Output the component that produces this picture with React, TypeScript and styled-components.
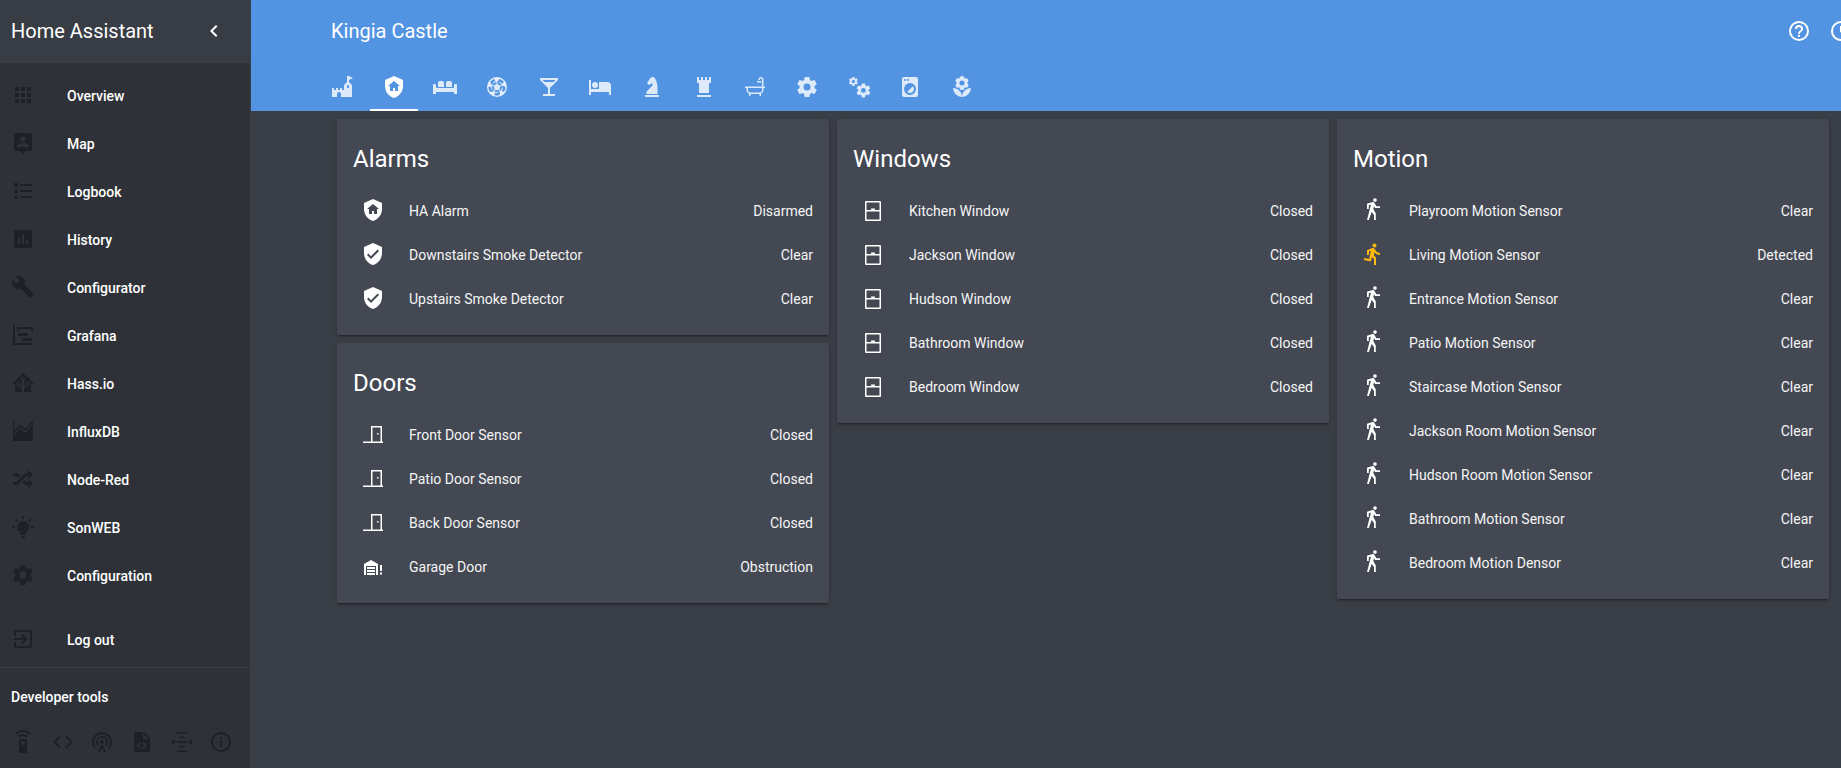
import styled, { createGlobalStyle } from 'styled-components'

const GEAR = 'M12,15.5A3.5,3.5 0 0,1 8.5,12A3.5,3.5 0 0,1 12,8.5A3.5,3.5 0 0,1 15.5,12A3.5,3.5 0 0,1 12,15.5M19.43,12.97C19.47,12.65 19.5,12.33 19.5,12C19.5,11.67 19.47,11.34 19.43,11L21.54,9.37C21.73,9.22 21.78,8.95 21.66,8.73L19.66,5.27C19.54,5.05 19.27,4.96 19.05,5.05L16.56,6.05C16.04,5.66 15.5,5.32 14.87,5.07L14.5,2.42C14.46,2.18 14.25,2 14,2H10C9.75,2 9.54,2.18 9.5,2.42L9.13,5.07C8.5,5.32 7.96,5.66 7.44,6.05L4.95,5.05C4.73,4.96 4.46,5.05 4.34,5.27L2.34,8.73C2.21,8.95 2.27,9.22 2.46,9.37L4.57,11C4.53,11.34 4.5,11.67 4.5,12C4.5,12.33 4.53,12.65 4.57,12.97L2.46,14.63C2.27,14.78 2.21,15.05 2.34,15.27L4.34,18.73C4.46,18.95 4.73,19.03 4.95,18.95L7.44,17.94C7.96,18.34 8.5,18.68 9.13,18.93L9.5,21.58C9.54,21.82 9.75,22 10,22H14C14.25,22 14.46,21.82 14.5,21.58L14.87,18.93C15.5,18.67 16.04,18.34 16.56,17.94L19.05,18.95C19.27,19.03 19.54,18.95 19.66,18.73L21.66,15.27C21.78,15.05 21.73,14.78 21.54,14.63L19.43,12.97Z'

const paths = {
  apps: 'M16,20H20V16H16M16,14H20V10H16M10,8H14V4H10M16,8H20V4H16M10,14H14V10H10M4,14H8V10H4M4,20H8V16H4M10,20H14V16H10M4,8H8V4H4V8Z',
  accountLocation: 'M18,16H6V15.1C6,13.1 10,12 12,12C14,12 18,13.1 18,15.1M12,5.3C13.5,5.3 14.7,6.5 14.7,8C14.7,9.5 13.5,10.7 12,10.7C10.5,10.7 9.3,9.5 9.3,8C9.3,6.5 10.5,5.3 12,5.3M19,2H5C3.89,2 3,2.89 3,4V18A2,2 0 0,0 5,20H9L12,23L15,20H19A2,2 0 0,0 21,18V4C21,2.89 20.1,2 19,2Z',
  listType: 'M5,9.5L7.5,14H2.5L5,9.5M3,4H7V8H3V4M5,20A2,2 0 0,0 7,18A2,2 0 0,0 5,16A2,2 0 0,0 3,18A2,2 0 0,0 5,20M9,5V7H21V5H9M9,19H21V17H9V19M9,13H21V11H9V13Z',
  pollBox: 'M17,17H15V13H17M13,17H11V7H13M9,17H7V10H9M19,3H5C3.89,3 3,3.89 3,5V19A2,2 0 0,0 5,21H19A2,2 0 0,0 21,19V5C21,3.89 20.1,3 19,3Z',
  wrench: 'M22.7,19L13.6,9.9C14.5,7.6 14,4.9 12.1,3C10.1,1 7.1,0.6 4.7,1.7L9,6L6,9L1.6,4.7C0.4,7.1 0.9,10.1 2.9,12.1C4.8,14 7.5,14.5 9.8,13.6L18.9,22.7C19.3,23.1 19.9,23.1 20.3,22.7L22.6,20.4C23.1,20 23.1,19.3 22.7,19Z',
  timeline: 'M2,2H4V20H22V22H2V2M7,10H17V13H7V10M11,15H21V18H11V15M6,4H22V8H20V6H8V8H6V4Z',
  hass: 'M21.8,13H20V21H13V17.67L15.79,14.88L16.5,15C17.66,15 18.6,14.06 18.6,12.9C18.6,11.74 17.66,10.8 16.5,10.8A2.1,2.1 0 0,0 14.4,12.9L14.5,13.61L13,15.13V9.65C13.66,9.29 14.1,8.6 14.1,7.8A2.1,2.1 0 0,0 12,5.7A2.1,2.1 0 0,0 9.9,7.8C9.9,8.6 10.34,9.29 11,9.65V15.13L9.5,13.61L9.6,12.9A2.1,2.1 0 0,0 7.5,10.8A2.1,2.1 0 0,0 5.4,12.9A2.1,2.1 0 0,0 7.5,15L8.21,14.88L11,17.67V21H4V13H2.25C1.83,13 1.42,13 1.42,12.79C1.43,12.57 1.85,12.15 2.28,11.72L11,3C11.33,2.67 11.67,2.33 12,2.33C12.33,2.33 12.67,2.67 13,3L17,7V6H19V9L21.78,11.78C22.18,12.18 22.59,12.59 22.6,12.8C22.6,13 22.2,13 21.8,13M7.5,12A0.9,0.9 0 0,1 8.4,12.9A0.9,0.9 0 0,1 7.5,13.8A0.9,0.9 0 0,1 6.6,12.9A0.9,0.9 0 0,1 7.5,12M16.5,12C17,12 17.4,12.4 17.4,12.9C17.4,13.4 17,13.8 16.5,13.8A0.9,0.9 0 0,1 15.6,12.9A0.9,0.9 0 0,1 16.5,12M12,6.9C12.5,6.9 12.9,7.3 12.9,7.8C12.9,8.3 12.5,8.7 12,8.7C11.5,8.7 11.1,8.3 11.1,7.8C11.1,7.3 11.5,6.9 12,6.9Z',
  influx: 'M2,2H3.5V16L9,10L14.5,14L22,5V22H2ZM3.5,11.5L9,5.5L14.5,9.5L22,1V3.5L14.5,12L9,8L3.5,14Z',
  shuffle: 'M17,3L22.25,7.5L17,12L22.25,16.5L17,21V18H14.26L11.44,15.18L13.56,13.06L15.5,15H17V12L17,9H15.5L6.5,18H2V15H5.26L14.26,6H17V3M2,6H6.5L9.32,8.82L7.2,10.94L5.26,9H2V6Z',
  bulb: 'M12,6A6,6 0 0,1 18,12C18,14.22 16.79,16.16 15,17.2V19A1,1 0 0,1 14,20H10A1,1 0 0,1 9,19V17.2C7.21,16.16 6,14.22 6,12A6,6 0 0,1 12,6M14,21V22A1,1 0 0,1 13,23H11A1,1 0 0,1 10,22V21H14M20,11H23V13H20V11M1,11H4V13H1V11M13,1V4H11V1H13M4.92,3.5L7.05,5.64L5.63,7.05L3.5,4.93L4.92,3.5M16.95,5.63L19.07,3.5L20.5,4.93L18.37,7.05L16.95,5.63Z',
  gear: GEAR,
  exit: 'M19,3H5C3.89,3 3,3.89 3,5V9H5V5H19V19H5V15H3V19A2,2 0 0,0 5,21H19A2,2 0 0,0 21,19V5C21,3.89 20.1,3 19,3M10.08,15.58L11.5,17L16.5,12L11.5,7L10.08,8.41L12.67,11H3V13H12.67L10.08,15.58Z',
  remote: 'M12,0C8.96,0 6.21,1.23 4.22,3.22L5.63,4.63C7.26,3 9.5,2 12,2C14.5,2 16.74,3 18.36,4.64L19.77,3.23C17.79,1.23 15.04,0 12,0M7.05,6.05L8.46,7.46C9.37,6.56 10.62,6 12,6C13.38,6 14.63,6.56 15.54,7.46L16.95,6.05C15.68,4.78 13.93,4 12,4C10.07,4 8.32,4.78 7.05,6.05M12,15A2,2 0 0,1 10,13A2,2 0 0,1 12,11A2,2 0 0,1 14,13A2,2 0 0,1 12,15M15,9H9A1,1 0 0,0 8,10V22A1,1 0 0,0 9,23H15A1,1 0 0,0 16,22V10A1,1 0 0,0 15,9Z',
  code: 'M14.6,16.6L19.2,12L14.6,7.4L16,6L22,12L16,18L14.6,16.6M9.4,16.6L4.8,12L9.4,7.4L8,6L2,12L8,18L9.4,16.6Z',
  podcast: 'M12,2A10,10 0 0,1 22,12C22,14.6 21,17 19.4,18.8L18,17.4C19.2,16 20,14.1 20,12A8,8 0 0,0 12,4A8,8 0 0,0 4,12C4,14.1 4.8,16 6,17.4L4.6,18.8C3,17 2,14.6 2,12A10,10 0 0,1 12,2M12,6A6,6 0 0,1 18,12C18,13.5 17.4,14.9 16.5,16L15.1,14.6C15.7,13.8 16,13 16,12A4,4 0 0,0 12,8A4,4 0 0,0 8,12C8,13 8.3,13.8 8.9,14.6L7.5,16C6.6,14.9 6,13.5 6,12A6,6 0 0,1 12,6M12,10A2,2 0 0,1 14,12A2,2 0 0,1 12,14A2,2 0 0,1 10,12A2,2 0 0,1 12,10M11,15H13L16,22H14L12,17.5L10,22H8Z',
  fileXml: 'M13,9H18.5L13,3.5V9M6,2H14L20,8V20A2,2 0 0,1 18,22H6C4.89,22 4,21.1 4,20V4C4,2.89 4.89,2 6,2M6.12,15.5L9.86,19.24L11.28,17.83L8.95,15.5L11.28,13.17L9.86,11.76L6.12,15.5M17.28,15.5L13.54,11.76L12.12,13.17L14.45,15.5L12.12,17.83L13.54,19.24L17.28,15.5Z',
  squeeze: 'M2,9L6,12L2,15ZM22,9L18,12L22,15ZM7,2H17V3.5H7ZM9.5,6.5H14.5V8H9.5ZM7,11.2H17V12.8H7ZM9.5,16H14.5V17.5H9.5ZM7,20.5H17V22H7Z',
  info: 'M11,9H13V7H11M12,20C7.59,20 4,16.41 4,12C4,7.59 7.59,4 12,4C16.41,4 20,7.59 20,12C20,16.41 16.41,20 12,20M12,2A10,10 0 0,0 2,12A10,10 0 0,0 12,22A10,10 0 0,0 22,12A10,10 0 0,0 12,2M11,17H13V11H11V17Z',
  chevron: 'M15.41,16.58L10.83,12L15.41,7.41L14,6L8,12L14,18L15.41,16.58Z',
  help: 'M11,18H13V16H11V18M12,2A10,10 0 0,0 2,12A10,10 0 0,0 12,22A10,10 0 0,0 22,12A10,10 0 0,0 12,2M12,20C7.59,20 4,16.41 4,12C4,7.59 7.59,4 12,4C16.41,4 20,7.59 20,12C20,16.41 16.41,20 12,20M12,6A4,4 0 0,0 8,10H10A2,2 0 0,1 12,8A2,2 0 0,1 14,10C14,12 11,11.75 11,15H13C13,12.75 16,12.5 16,10A4,4 0 0,0 12,6Z',
  clock: 'M12,20A8,8 0 0,0 20,12A8,8 0 0,0 12,4A8,8 0 0,0 4,12A8,8 0 0,0 12,20M12,2A10,10 0 0,1 22,12A10,10 0 0,1 12,22C6.47,22 2,17.5 2,12A10,10 0 0,1 12,2M12.5,7V12.25L17,14.92L16.25,16.15L11,13V7H12.5Z',
  castle: 'M2,13H4V15H6V13H8V15H10V13H12V15H14V10L17,7V1H19L23,3L19,5V7L22,10V22H11V19A2,2 0 0,0 9,17A2,2 0 0,0 7,19V22H2V13M18,10C17.45,10 17,10.54 17,11.2V13H19V11.2C19,10.54 18.55,10 18,10Z',
  shieldHome: 'M11,13H13V16H16V11H18L12,6L6,11H8V16H11V13M12,1L21,5V11C21,16.55 17.16,21.74 12,23C6.84,21.74 3,16.55 3,11V5L12,1Z',
  sofa: 'M7,6H9A2,2 0 0,1 11,8V12H5V8A2,2 0 0,1 7,6M15,6H17A2,2 0 0,1 19,8V12H13V8A2,2 0 0,1 15,6M1,9H2A1,1 0 0,1 3,10V12A1,1 0 0,0 4,13H20A1,1 0 0,0 21,12V10A1,1 0 0,1 22,9H23A1,1 0 0,1 24,10V19H21V17H3V19H0V10A1,1 0 0,1 1,9Z',
  cocktail: 'M7.5,7L5.5,5H18.5L16.5,7M11,13V19H6V21H18V19H13V13L21,5V3H3V5L11,13Z',
  hotel: 'M19,7H11V14H3V5H1V20H3V17H21V20H23V11A4,4 0 0,0 19,7M7,13A3,3 0 0,0 10,10A3,3 0 0,0 7,7A3,3 0 0,0 4,10A3,3 0 0,0 7,13Z',
  knight: 'M19,22H5V20H19V22M13,2V2C11.75,2 10.58,2.62 9.89,3.66L7,8L9,10L11.06,8.63C11.5,8.32 12.14,8.44 12.45,8.9C12.47,8.93 12.5,8.96 12.5,9V9C12.8,9.59 12.69,10.31 12.22,10.78L7.11,15.89C6.75,16.25 6.5,16.75 6.5,17.27V19H17.5V13C17.5,8.03 15.5,2 13,2Z',
  rook: 'M5,20H19V22H5V20M17,2V5H15V2H13V5H11V2H9V5H7V2H5V8H7V18H17V8H19V2H17Z',
  washer: 'M14.83,11.17C16.39,12.73 16.39,15.27 14.83,16.83C13.27,18.39 10.73,18.39 9.17,16.83L14.83,11.17M6,2H18A2,2 0 0,1 20,4V20A2,2 0 0,1 18,22H6A2,2 0 0,1 4,20V4A2,2 0 0,1 6,2M7,4A1,1 0 0,0 6,5A1,1 0 0,0 7,6A1,1 0 0,0 8,5A1,1 0 0,0 7,4M10,4A1,1 0 0,0 9,5A1,1 0 0,0 10,6A1,1 0 0,0 11,5A1,1 0 0,0 10,4M12,8A6,6 0 0,0 6,14A6,6 0 0,0 12,20A6,6 0 0,0 18,14A6,6 0 0,0 12,8Z',
  flower: 'M3,13A9,9 0 0,0 12,22C12,17 7.97,13 3,13M12,5.5A2.5,2.5 0 0,1 14.5,8A2.5,2.5 0 0,1 12,10.5A2.5,2.5 0 0,1 9.5,8A2.5,2.5 0 0,1 12,5.5M5.6,10.25A2.5,2.5 0 0,0 8.1,12.75C8.63,12.75 9.12,12.58 9.5,12.31C9.5,12.37 9.5,12.43 9.5,12.5A2.5,2.5 0 0,0 12,15A2.5,2.5 0 0,0 14.5,12.5C14.5,12.43 14.5,12.37 14.5,12.31C14.88,12.58 15.37,12.75 15.9,12.75C17.28,12.75 18.4,11.63 18.4,10.25C18.4,9.25 17.81,8.4 16.97,8C17.81,7.6 18.4,6.74 18.4,5.75C18.4,4.37 17.28,3.25 15.9,3.25C15.37,3.25 14.88,3.41 14.5,3.69C14.5,3.63 14.5,3.56 14.5,3.5A2.5,2.5 0 0,0 12,1A2.5,2.5 0 0,0 9.5,3.5C9.5,3.56 9.5,3.63 9.5,3.69C9.12,3.41 8.63,3.25 8.1,3.25A2.5,2.5 0 0,0 5.6,5.75C5.6,6.74 6.19,7.6 7.03,8C6.19,8.4 5.6,9.25 5.6,10.25M12,22A9,9 0 0,0 21,13C16,13 12,17 12,22Z',
  shieldCheck: 'M10,17L6,13L7.41,11.59L10,14.17L16.59,7.58L18,9M12,1L3,5V11C3,16.55 6.84,21.74 12,23C17.16,21.74 21,16.55 21,11V5L12,1Z',
  door: 'M2,19.5H10V4H21V19.5H22V21H2ZM11.5,5.5V19.5H19.5V5.5ZM16,11H17.5V12.5H16Z',
  garage: 'M17,21H15V12H5V21H3V10L10,6L17,10V21M6,13H14V15H6V13M6,16H14V18H6V16M14,19V21H6V19H14M19,18.5V20.5H21V18.5H19M19,11V17H21V11H19Z',
  window: 'M5,3H19A1,1 0 0,1 20,4V22A1,1 0 0,1 19,23H5A1,1 0 0,1 4,22V4A1,1 0 0,1 5,3ZM5.5,4.5V12H10V10.5H14V12H18.5V4.5ZM5.5,13.5V21.5H18.5V13.5Z',
  walk: 'M14.12,10H19V8.2H15.38L13.38,4.87C13.08,4.37 12.54,4.03 11.92,4.03C11.74,4.03 11.58,4.06 11.42,4.11L6,5.8V11H7.8V7.33L9.91,6.67L6,22H7.8L10.67,13.89L13,17V22H14.8V15.59L12.31,11.05L13.04,8.18M14,3.8C15,3.8 15.8,3 15.8,2C15.8,1 15,0.2 14,0.2C13,0.2 12.2,1 12.2,2C12.2,3 13,3.8 14,3.8Z',
  run: 'M13.5,5.5C14.59,5.5 15.5,4.58 15.5,3.5C15.5,2.38 14.59,1.5 13.5,1.5C12.39,1.5 11.5,2.38 11.5,3.5C11.5,4.58 12.39,5.5 13.5,5.5M9.89,19.38L10.89,15L13,17V23H15V15.5L12.89,13.5L13.5,10.5C14.79,12 16.79,13 19,13V11C17.09,11 15.5,10 14.69,8.58L13.69,7C13.29,6.38 12.69,6 12,6C11.69,6 11.5,6.08 11.19,6.08L6,8.28V13H8V9.58L9.79,8.88L8.19,17L3.29,16L2.89,18L9.89,19.38Z',
}

type IconName = keyof typeof paths

const GlobalStyle = createGlobalStyle`
  html, body {
    margin: 0;
    height: 100%;
    overflow: hidden;
    background: #3a3e46;
  }
  body {
    font-family: Roboto, "Liberation Sans", sans-serif;
    color: #fff;
  }
`

const Shell = styled.div`
  display: flex;
  width: 1841px;
  height: 768px;
  overflow: hidden;
`

const Sidebar = styled.aside`
  flex: 0 0 250px;
  display: flex;
  flex-direction: column;
  background: #2e3238;
  border-right: 1px solid #3a3e46;
`

const SidebarHead = styled.div`
  height: 63px;
  box-sizing: border-box;
  display: flex;
  align-items: center;
  justify-content: space-between;
  padding: 0 24px 1px 11px;
  background: #383c44;
  font-size: 20px;
  color: #fff;
`

const Nav = styled.nav`
  padding-top: 8px;
  flex: 1;
`

const NavItem = styled.div<{ $gap?: boolean }>`
  height: 48px;
  display: flex;
  align-items: center;
  padding-left: 11px;
  gap: 32px;
  font-size: 14px;
  font-weight: 500;
  color: #fff;
  margin-top: ${p => (p.$gap ? '16px' : '0')};
`

const NavLabel = styled.span`
  padding-top: 1px;
`

const Divider = styled.div`
  border-top: 1px solid #3a3e46;
  margin-bottom: 17px;
`

const ToolsTitle = styled.div`
  padding-left: 11px;
  font-size: 14px;
  font-weight: 500;
  line-height: 24px;
  color: #fff;
`

const ToolsRow = styled.div`
  display: flex;
  gap: 15.7px;
  padding: 21px 0 14px 11px;
`

const Main = styled.main`
  flex: 1;
  min-width: 0;
  overflow: hidden;
`

const Header = styled.header`
  height: 111px;
  background: #5294e2;
`

const TitleRow = styled.div`
  width: 1620px;
  height: 63px;
  display: flex;
  align-items: center;
  gap: 18px;
  padding: 0 18px 1px 80px;
  box-sizing: border-box;
  font-size: 20px;
`

const Title = styled.div`
  flex: 1;
`

const Tabs = styled.div`
  display: flex;
  gap: 3.67px;
  padding-left: 67px;
`

const Tab = styled.div<{ $active?: boolean }>`
  width: 48px;
  height: 48px;
  box-sizing: border-box;
  display: flex;
  align-items: center;
  justify-content: center;
  color: ${p => (p.$active ? '#fff' : 'rgba(255, 255, 255, 0.8)')};
  border-bottom: 2px solid ${p => (p.$active ? '#fff' : 'transparent')};
  padding-top: 2px;
`

const Columns = styled.div`
  display: grid;
  grid-template-columns: repeat(3, 492px);
  gap: 8px;
  align-items: start;
  padding: 8px 0 0 86px;
`

const Column = styled.div`
  display: flex;
  flex-direction: column;
  gap: 8px;
`

const Card = styled.section`
  background: #434853;
  border-radius: 2px;
  padding: 24px 16px 15px;
  box-shadow: 0 2px 2px rgba(0, 0, 0, 0.14), 0 1px 5px rgba(0, 0, 0, 0.12), 0 3px 1px -2px rgba(0, 0, 0, 0.2);
`

const CardTitle = styled.h2`
  margin: 0 0 13px;
  font-size: 24px;
  font-weight: 400;
  line-height: 32px;
  color: #fff;
`

const Row = styled.div`
  height: 44px;
  display: flex;
  align-items: center;
  font-size: 14px;
  color: #f5f5f5;
`

const RowIcon = styled.div`
  flex: 0 0 40px;
  height: 24px;
  padding-left: 8px;
  margin-right: 8px;
`

const RowName = styled.div`
  flex: 1;
  padding-top: 1px;
`

const RowState = styled.div`
  padding-top: 1px;
`

const Svg = styled.svg<{ $color?: string; $size?: number }>`
  display: block;
  flex: none;
  width: ${p => p.$size ?? 24}px;
  height: ${p => p.$size ?? 24}px;
  fill: ${p => p.$color ?? 'currentColor'};
`

const SIDE = '#1d2024'

function Icon({ name, color, size }: { name: IconName; color?: string; size?: number }) {
  return (
    <Svg viewBox="0 0 24 24" $color={color} $size={size}>
      <path d={paths[name]} />
    </Svg>
  )
}

// mdi soccer is a disc with five dark gaps round a centre pentagon
function SoccerIcon() {
  return (
    <Svg viewBox="0 0 24 24">
      <path d="M12,2A10,10 0 0,1 22,12A10,10 0 0,1 2,12A10,10 0 0,1 12,2M12,3.4A8.6,8.6 0 0,0 3.4,12A8.6,8.6 0 0,0 20.6,12A8.6,8.6 0 0,0 12,3.4Z" fillRule="evenodd" />
      <path d="M12,8.4L15.42,10.89L14.12,14.91H9.88L8.58,10.89Z" />
      {[0, 72, 144, 216, 288].map(a => (
        <g key={a} transform={`rotate(${a} 12 12)`}>
          <path d="M8.6,3L15.4,3L12.6,6.4V8.6H11.4V6.4Z" />
          <path d="M14.5,6.5L17.6,8.4L18,7.2L19,9.4L17.4,10.2L14,7.6Z" opacity="0.8" />
        </g>
      ))}
    </Svg>
  )
}

function BathIcon() {
  return (
    <Svg viewBox="0 0 24 24">
      <path d="M2,11.5H22V13H20.5V15A4,4 0 0,1 18,18.7V21H16.5V19H7.5V21H6V18.7A4,4 0 0,1 3.5,15V13H2ZM5,13V15A2.5,2.5 0 0,0 7.5,17.5H16.5A2.5,2.5 0 0,0 19,15V13Z" fillRule="evenodd" />
      <path d="M19,11.5V4.5A1,1 0 0,0 17,4.5V5H15.5V4.5A2.5,2.5 0 0,1 20.5,4.5V11.5ZM14,6H18.5V7.5H14Z" />
    </Svg>
  )
}

function CogsIcon() {
  return (
    <Svg viewBox="0 0 24 24">
      <path d={GEAR} transform="translate(1 1) scale(0.45)" />
      <path d={GEAR} transform="translate(8 7) scale(0.7)" />
    </Svg>
  )
}

const navItems: [IconName, string][] = [
  ['apps', 'Overview'],
  ['accountLocation', 'Map'],
  ['listType', 'Logbook'],
  ['pollBox', 'History'],
  ['wrench', 'Configurator'],
  ['timeline', 'Grafana'],
  ['hass', 'Hass.io'],
  ['influx', 'InfluxDB'],
  ['shuffle', 'Node-Red'],
  ['bulb', 'SonWEB'],
  ['gear', 'Configuration'],
]

const toolIcons: IconName[] = ['remote', 'code', 'podcast', 'fileXml', 'squeeze', 'info']

type Sensor = { name: string; state: string; icon: IconName; color?: string }

const alarms: Sensor[] = [
  { name: 'HA Alarm', state: 'Disarmed', icon: 'shieldHome' },
  { name: 'Downstairs Smoke Detector', state: 'Clear', icon: 'shieldCheck' },
  { name: 'Upstairs Smoke Detector', state: 'Clear', icon: 'shieldCheck' },
]

const doors: Sensor[] = [
  { name: 'Front Door Sensor', state: 'Closed', icon: 'door' },
  { name: 'Patio Door Sensor', state: 'Closed', icon: 'door' },
  { name: 'Back Door Sensor', state: 'Closed', icon: 'door' },
  { name: 'Garage Door', state: 'Obstruction', icon: 'garage' },
]

const windows: Sensor[] = ['Kitchen', 'Jackson', 'Hudson', 'Bathroom', 'Bedroom'].map(n => ({
  name: `${n} Window`,
  state: 'Closed',
  icon: 'window',
}))

const motion: Sensor[] = [
  { name: 'Playroom Motion Sensor', state: 'Clear', icon: 'walk' },
  { name: 'Living Motion Sensor', state: 'Detected', icon: 'run', color: '#fdb90f' },
  { name: 'Entrance Motion Sensor', state: 'Clear', icon: 'walk' },
  { name: 'Patio Motion Sensor', state: 'Clear', icon: 'walk' },
  { name: 'Staircase Motion Sensor', state: 'Clear', icon: 'walk' },
  { name: 'Jackson Room Motion Sensor', state: 'Clear', icon: 'walk' },
  { name: 'Hudson Room Motion Sensor', state: 'Clear', icon: 'walk' },
  { name: 'Bathroom Motion Sensor', state: 'Clear', icon: 'walk' },
  { name: 'Bedroom Motion Densor', state: 'Clear', icon: 'walk' },
]

function SensorCard({ title, rows }: { title: string; rows: Sensor[] }) {
  return (
    <Card>
      <CardTitle>{title}</CardTitle>
      {rows.map(r => (
        <Row key={r.name}>
          <RowIcon>
            <Icon name={r.icon} color={r.color ?? '#fff'} />
          </RowIcon>
          <RowName>{r.name}</RowName>
          <RowState>{r.state}</RowState>
        </Row>
      ))}
    </Card>
  )
}

export default function App() {
  return (
    <Shell>
      <GlobalStyle />
      <Sidebar>
        <SidebarHead>
          Home Assistant
          <Icon name="chevron" color="#fff" />
        </SidebarHead>
        <Nav>
          {navItems.map(([icon, label]) => (
            <NavItem key={label}>
              <Icon name={icon} color={SIDE} />
              <NavLabel>{label}</NavLabel>
            </NavItem>
          ))}
          <NavItem $gap>
            <Icon name="exit" color={SIDE} />
            <NavLabel>Log out</NavLabel>
          </NavItem>
        </Nav>
        <Divider />
        <ToolsTitle>Developer tools</ToolsTitle>
        <ToolsRow>
          {toolIcons.map(i => (
            <Icon key={i} name={i} color={SIDE} />
          ))}
        </ToolsRow>
      </Sidebar>
      <Main>
        <Header>
          <TitleRow>
            <Title>Kingia Castle</Title>
            <Icon name="help" color="#fff" />
            <Icon name="clock" color="#fff" />
          </TitleRow>
          <Tabs>
            <Tab><Icon name="castle" /></Tab>
            <Tab $active><Icon name="shieldHome" /></Tab>
            <Tab><Icon name="sofa" /></Tab>
            <Tab><SoccerIcon /></Tab>
            <Tab><Icon name="cocktail" /></Tab>
            <Tab><Icon name="hotel" /></Tab>
            <Tab><Icon name="knight" /></Tab>
            <Tab><Icon name="rook" /></Tab>
            <Tab><BathIcon /></Tab>
            <Tab><Icon name="gear" /></Tab>
            <Tab><CogsIcon /></Tab>
            <Tab><Icon name="washer" /></Tab>
            <Tab><Icon name="flower" /></Tab>
          </Tabs>
        </Header>
        <Columns>
          <Column>
            <SensorCard title="Alarms" rows={alarms} />
            <SensorCard title="Doors" rows={doors} />
          </Column>
          <Column>
            <SensorCard title="Windows" rows={windows} />
          </Column>
          <Column>
            <SensorCard title="Motion" rows={motion} />
          </Column>
        </Columns>
      </Main>
    </Shell>
  )
}
